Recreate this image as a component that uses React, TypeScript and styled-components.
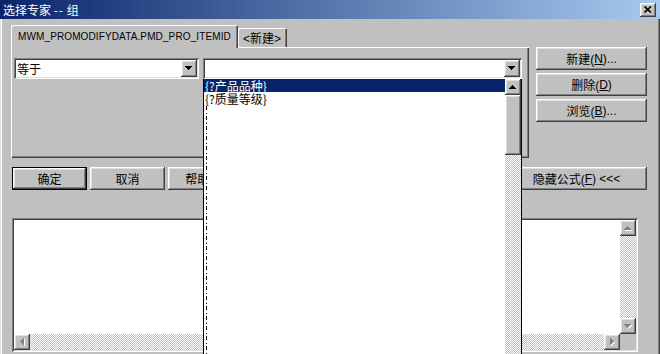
import React from 'react';
import styled, { createGlobalStyle, css } from 'styled-components';

const Global = createGlobalStyle`
  *, *::before, *::after { box-sizing: border-box; }
  html, body { margin: 0; padding: 0; background: #c0c0c0; overflow: hidden; }
  #root { width: 660px; height: 354px; }
`;

const FONT = `"Liberation Sans", "Noto Sans CJK SC", sans-serif`;

const raised = css`
  box-shadow: inset -1px -1px #404040, inset 1px 1px #ffffff, inset -2px -2px #808080, inset 2px 2px #dfdfdf;
`;
const sunken = css`
  box-shadow: inset 1px 1px #808080, inset -1px -1px #ffffff, inset 2px 2px #404040, inset -2px -2px #dfdfdf;
`;
const checker = css`
  background: repeating-conic-gradient(#c0c0c0 0% 25%, #ffffff 0% 50%) 0 0 / 2px 2px;
`;

const Window = styled.div`
  position: relative;
  width: 660px;
  height: 354px;
  overflow: hidden;
  background: #c0c0c0;
  font-family: ${FONT};
  font-size: 12px;
  color: #000;
  display: flex;
  flex-direction: column;
  box-shadow: inset -1px 0 #404040, inset -2px 0 #808080, inset 1px 0 #dfdfdf, inset 2px 0 #ffffff;
`;

const TitleBar = styled.div`
  height: 19px;
  flex: none;
  display: flex;
  align-items: center;
  justify-content: space-between;
  background: linear-gradient(to right, #0a246a, #a6caf0);
  color: #fff;
  padding: 0 4px 0 3px;
`;

const Title = styled.span`
  font-family: "Noto Sans CJK SC", sans-serif;
  font-size: 12px;
  line-height: 19px;
  white-space: pre;
`;

const Dashes = styled.span`
  letter-spacing: 1px;
`;

const CloseBtn = styled.div`
  width: 16px;
  height: 14px;
  background: #c0c0c0;
  ${raised};
  display: flex;
  align-items: center;
  justify-content: center;
  padding-right: 1px;
`;

const Body = styled.div`
  flex: 1;
  display: flex;
  flex-direction: column;
  padding: 6px 13px 0 11px;
`;

const TopRow = styled.div`
  display: flex;
  gap: 7px;
`;

const TabArea = styled.div`
  width: 518px;
  display: flex;
  flex-direction: column;
`;

const TabStrip = styled.div`
  display: flex;
  align-items: flex-end;
  height: 22px;
  position: relative;
  z-index: 1;
`;

const Tab = styled.div<{ $active?: boolean }>`
  height: ${(p) => (p.$active ? '23px' : '19px')};
  margin-bottom: ${(p) => (p.$active ? '-1px' : '0')};
  padding: ${(p) => (p.$active ? '0 7px 1px 7px' : '0 6px 0 5px')};
  display: flex;
  align-items: center;
  background: #c0c0c0;
  border-top-left-radius: 2px;
  border-top-right-radius: 2px;
  box-shadow: inset 1px 1px #ffffff, inset -1px 0 #404040, inset -2px 0 #808080;
  white-space: nowrap;
`;

const TabLabel = styled.span<{ $latin?: boolean }>`
  font-family: ${(p) => (p.$latin ? `"Liberation Sans", sans-serif` : FONT)};
  font-size: ${(p) => (p.$latin ? '10px' : '12px')};
  letter-spacing: ${(p) => (p.$latin ? '0.12px' : '0')};
`;

const Panel = styled.div`
  height: 111px;
  background: #c0c0c0;
  box-shadow: inset 1px 1px #ffffff, inset -1px -1px #404040, inset -2px -2px #808080;
  padding: 11px 2px 0 3px;
  display: flex;
  gap: 4px;
  align-items: flex-start;
`;

const Combo = styled.div<{ $w: number }>`
  position: relative;
  width: ${(p) => p.$w}px;
  height: 21px;
  background: #fff;
  ${sunken};
  display: flex;
  align-items: center;
  padding: 2px 2px 2px 3px;
`;

const ComboText = styled.span`
  flex: 1;
  font-family: "Noto Sans CJK SC", sans-serif;
  font-size: 12px;
  line-height: 17px;
`;

const ArrowBtn = styled.div`
  width: 16px;
  height: 17px;
  flex: none;
  background: #c0c0c0;
  ${raised};
  display: flex;
  align-items: center;
  justify-content: center;
`;

const DropList = styled.div`
  position: absolute;
  left: 0;
  top: 100%;
  width: 319px;
  height: 300px;
  background: #fff;
  border: 1px solid #000;
  border-top: none;
  z-index: 5;
  display: flex;
`;

const ListItems = styled.div`
  position: relative;
  flex: 1;
  display: flex;
  flex-direction: column;
  &::after {
    content: '';
    position: absolute;
    left: 2px;
    top: 27px;
    bottom: 0;
    width: 1px;
    background: repeating-linear-gradient(to bottom, #000 0 4px, transparent 4px 7px, #000 7px 8px, transparent 8px 10px);
  }
`;

const ListItem = styled.div<{ $sel?: boolean }>`
  height: 13px;
  line-height: 13px;
  flex: none;
  padding-left: 1px;
  font-family: "Noto Sans CJK SC", sans-serif;
  font-size: 12px;
  white-space: nowrap;
  background: ${(p) => (p.$sel ? '#0a246a' : 'transparent')};
  color: ${(p) => (p.$sel ? '#fff' : '#000')};
`;

const VScroll = styled.div`
  width: 16px;
  flex: none;
  display: flex;
  flex-direction: column;
`;

const Thumb = styled.div<{ $h: number }>`
  height: ${(p) => p.$h}px;
  flex: none;
  background: #c0c0c0;
  ${raised};
`;

const Track = styled.div`
  flex: 1;
  ${checker};
`;

const ScrollBtn = styled.div`
  width: 16px;
  height: 16px;
  flex: none;
  background: #c0c0c0;
  ${raised};
  display: flex;
  align-items: center;
  justify-content: center;
`;

const SideButtons = styled.div`
  width: 111px;
  margin-top: 22px;
  display: flex;
  flex-direction: column;
  gap: 3px;
`;

const Button = styled.div<{ $w?: number; $default?: boolean }>`
  width: ${(p) => (p.$w ? `${p.$w}px` : '100%')};
  height: 23px;
  flex: none;
  background: #c0c0c0;
  display: flex;
  align-items: center;
  justify-content: center;
  font-family: ${FONT};
  font-size: 12px;
  white-space: pre;
  ${(p) =>
    p.$default
      ? css`
          box-shadow: inset 0 0 0 1px #000, inset -2px -2px #404040, inset 2px 2px #ffffff, inset -3px -3px #808080,
            inset 3px 3px #dfdfdf;
        `
      : raised};
`;

const ButtonRow = styled.div`
  margin: 9px 0 0 1px;
  display: flex;
  gap: 3px;
`;

const Spacer = styled.div`
  flex: 1;
`;

const TextArea = styled.div`
  margin: 28px 0 0 1px;
  width: 626px;
  height: 134px;
  flex: none;
  ${sunken};
  padding: 2px;
  display: grid;
  grid-template-columns: 1fr 16px;
  grid-template-rows: 1fr 16px;
`;

const TextContent = styled.div`
  background: #fff;
`;

const HScroll = styled.div`
  display: flex;
`;

const Corner = styled.div`
  background: #c0c0c0;
`;

type Dir = 'up' | 'down' | 'left' | 'right';

const pts: Record<Dir, { w: number; h: number; p: string }> = {
  up: { w: 7, h: 4, p: '3.5,0 7,4 0,4' },
  down: { w: 7, h: 4, p: '0,0 7,0 3.5,4' },
  left: { w: 4, h: 7, p: '4,0 4,7 0,3.5' },
  right: { w: 4, h: 7, p: '0,0 0,7 4,3.5' },
};

const Arrow: React.FC<{ dir: Dir; disabled?: boolean }> = ({ dir, disabled }) => {
  const a = pts[dir];
  return (
    <svg width={a.w + 1} height={a.h + 1} viewBox={`0 0 ${a.w + 1} ${a.h + 1}`} shapeRendering="crispEdges">
      {disabled && <polygon points={a.p} fill="#ffffff" transform="translate(1,1)" />}
      <polygon points={a.p} fill={disabled ? '#808080' : '#000'} />
    </svg>
  );
};

const CloseIcon = () => (
  <svg width="8" height="7" viewBox="0 0 8 7">
    <path d="M0.5 0.5 L7 6.5 M7 0.5 L0.5 6.5" stroke="#000" strokeWidth="1.6" />
  </svg>
);

export default function App() {
  return (
    <>
      <Global />
      <Window>
        <TitleBar>
          <Title>
            选择专家 <Dashes>--</Dashes> 组
          </Title>
          <CloseBtn>
            <CloseIcon />
          </CloseBtn>
        </TitleBar>
        <Body>
          <TopRow>
            <TabArea>
              <TabStrip>
                <Tab $active>
                  <TabLabel $latin>MWM_PROMODIFYDATA.PMD_PRO_ITEMID</TabLabel>
                </Tab>
                <Tab>
                  <TabLabel>&lt;新建&gt;</TabLabel>
                </Tab>
              </TabStrip>
              <Panel>
                <Combo $w={185}>
                  <ComboText>等于</ComboText>
                  <ArrowBtn>
                    <Arrow dir="down" />
                  </ArrowBtn>
                </Combo>
                <Combo $w={319}>
                  <ComboText />
                  <ArrowBtn>
                    <Arrow dir="down" />
                  </ArrowBtn>
                  <DropList>
                    <ListItems>
                      <ListItem $sel>{'{?产品品种}'}</ListItem>
                      <ListItem>{'{?质量等级}'}</ListItem>
                    </ListItems>
                    <VScroll>
                      <ScrollBtn>
                        <Arrow dir="up" />
                      </ScrollBtn>
                      <Thumb $h={60} />
                      <Track />
                    </VScroll>
                  </DropList>
                </Combo>
              </Panel>
            </TabArea>
            <SideButtons>
              <Button>
                新建(<u>N</u>)...
              </Button>
              <Button>
                删除(<u>D</u>)
              </Button>
              <Button>
                浏览(<u>B</u>)...
              </Button>
            </SideButtons>
          </TopRow>
          <ButtonRow>
            <Button $w={75} $default>
              确定
            </Button>
            <Button $w={75}>取消</Button>
            <Button $w={75}>
              帮助(<u>H</u>)
            </Button>
            <Spacer />
            <Button $w={141}>
              隐藏公式(<u>F</u>) &lt;&lt;&lt;
            </Button>
          </ButtonRow>
          <TextArea>
            <TextContent />
            <VScroll>
              <ScrollBtn>
                <Arrow dir="up" disabled />
              </ScrollBtn>
              <Track />
              <ScrollBtn>
                <Arrow dir="down" disabled />
              </ScrollBtn>
            </VScroll>
            <HScroll>
              <ScrollBtn>
                <Arrow dir="left" disabled />
              </ScrollBtn>
              <Track />
              <ScrollBtn>
                <Arrow dir="right" disabled />
              </ScrollBtn>
            </HScroll>
            <Corner />
          </TextArea>
        </Body>
      </Window>
    </>
  );
}
